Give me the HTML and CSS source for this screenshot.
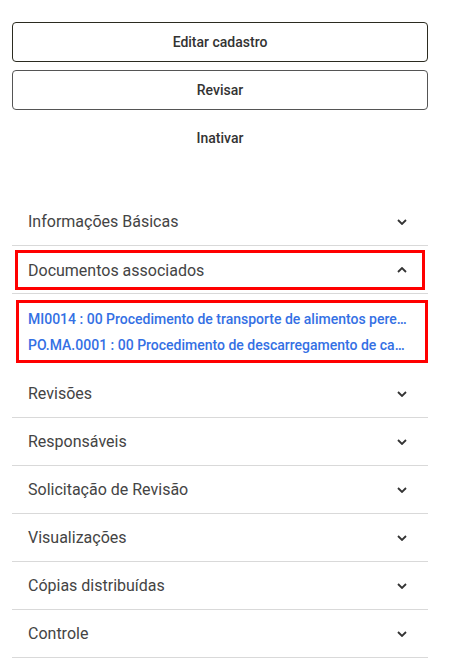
FILE: index.html
```html
<!DOCTYPE html>
<html lang="pt">
<head>
<meta charset="utf-8">
<link rel="stylesheet" href="styles.css">
</head>
<body>
<div class="page">
  <div class="actions">
    <button class="btn btn-outline btn-dark">Editar cadastro</button>
    <button class="btn btn-outline">Revisar</button>
    <button class="btn btn-text">Inativar</button>
  </div>
  <div class="accordion">
    <div class="item">
      <div class="header"><span class="title">Informações Básicas</span><svg class="chev" viewBox="0 0 10 6"><path d="M1 1 L5 5 L9 1"/></svg></div>
    </div>
    <div class="item open">
      <div class="header highlight"><span class="title">Documentos associados</span><svg class="chev" viewBox="0 0 10 6"><path d="M1 5 L5 1 L9 5"/></svg></div>
    </div>
    <div class="panel">
      <div class="links highlight">
        <a class="link">MI0014 : 00 Procedimento de transporte de alimentos perecíveis</a>
        <a class="link">PO.MA.0001 : 00 Procedimento de descarregamento de carga</a>
      </div>
    </div>
    <div class="item">
      <div class="header"><span class="title">Revisões</span><svg class="chev" viewBox="0 0 10 6"><path d="M1 1 L5 5 L9 1"/></svg></div>
    </div>
    <div class="item">
      <div class="header"><span class="title">Responsáveis</span><svg class="chev" viewBox="0 0 10 6"><path d="M1 1 L5 5 L9 1"/></svg></div>
    </div>
    <div class="item">
      <div class="header"><span class="title">Solicitação de Revisão</span><svg class="chev" viewBox="0 0 10 6"><path d="M1 1 L5 5 L9 1"/></svg></div>
    </div>
    <div class="item">
      <div class="header"><span class="title">Visualizações</span><svg class="chev" viewBox="0 0 10 6"><path d="M1 1 L5 5 L9 1"/></svg></div>
    </div>
    <div class="item">
      <div class="header"><span class="title">Cópias distribuídas</span><svg class="chev" viewBox="0 0 10 6"><path d="M1 1 L5 5 L9 1"/></svg></div>
    </div>
    <div class="item">
      <div class="header"><span class="title">Controle</span><svg class="chev" viewBox="0 0 10 6"><path d="M1 1 L5 5 L9 1"/></svg></div>
    </div>
  </div>
</div>
</body>
</html>
```
FILE: styles.css
```css
* { box-sizing: border-box; }
html, body { margin: 0; padding: 0; background: #fff; }
body { font-family: Roboto, "Liberation Sans", sans-serif; }
.page { width: 416px; margin-left: 12px; padding-top: 22px; }
.actions { display: flex; flex-direction: column; gap: 8px; }
.btn {
  height: 40px; width: 100%;
  font-family: Roboto, "Liberation Sans", sans-serif;
  font-size: 14px; font-weight: 500; color: #333;
  background: #fff; border-radius: 4px; cursor: pointer; padding: 0 0 1px;
}
.btn-outline { border: 1px solid #555; }
.btn-dark { border-color: #2b2b20; }
.btn-text { border: 1px solid transparent; }
.accordion { margin-top: 40px; }
.item { border-bottom: 1px solid #d9d9d9; }
.header {
  height: 47px; display: flex; align-items: center; justify-content: space-between;
  padding: 0 21px 0 16px;
}
.header.highlight { margin: 4px 3px 3px 3px; height: 40px; padding: 0 15px 0 10px; border: 3px solid #f00; }
.title { font-size: 16px; color: #444; }
.chev { width: 10px; height: 6px; fill: none; stroke: #333; stroke-width: 1.8; }
.panel { padding: 6px 0 6px 4px; height: 76px; }
.links.highlight { border: 3px solid #f00; height: 63px; padding: 6px 18px 0 9px; display: flex; flex-direction: column; gap: 6px; }
.link {
  display: block; font-size: 14px; font-weight: 500; color: #3470e4;
  white-space: nowrap; overflow: hidden; text-overflow: ellipsis; line-height: 20px;
}
```
